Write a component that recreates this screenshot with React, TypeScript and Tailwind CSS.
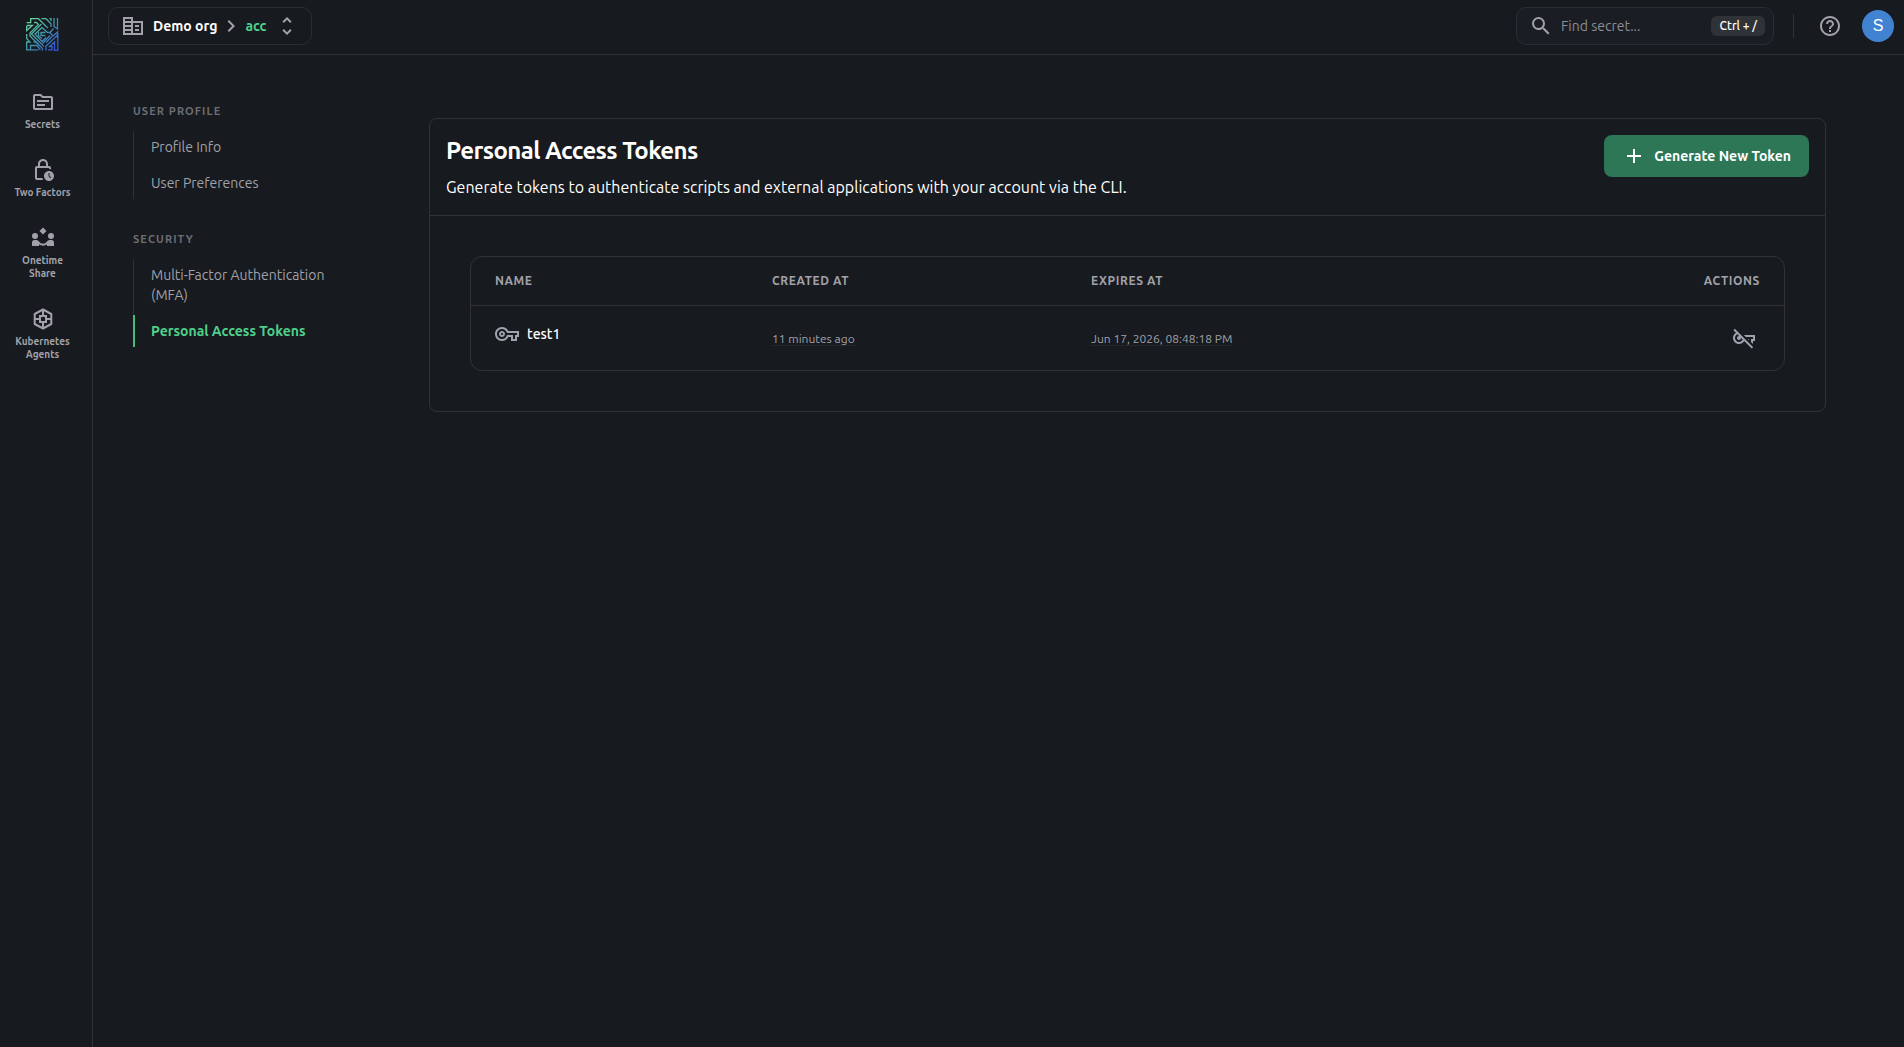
import type { ReactNode } from "react";
import {
  MdAdd,
  MdChevronRight,
  MdHelpOutline,
  MdOutlineLockClock,
  MdOutlineTopic,
  MdOutlineVpnKey,
  MdOutlineVpnKeyOff,
  MdSearch,
  MdUnfoldMore,
} from "react-icons/md";

function Logo() {
  return (
    <svg viewBox="0 0 33 33" className="size-[33px]" fill="none" stroke="url(#logo-fill)" strokeWidth="1.3" aria-hidden="true">
      <defs>
        <linearGradient id="logo-fill" x1="0" y1="0" x2="33" y2="33" gradientUnits="userSpaceOnUse">
          <stop offset="0" stopColor="#6ee79a" />
          <stop offset="0.5" stopColor="#3f93ad" />
          <stop offset="1" stopColor="#3448e0" />
        </linearGradient>
      </defs>
      <path d="M0.7 4.7H4.7V0.7H12.5L19 7.2" />
      <path d="M8 4.5H10.5L12.5 6.5L4 15V18L12.5 26.5" />
      <path d="M15.5 0.7H20L25 5.7V9" />
      <path d="M23.5 0.7H25V3" />
      <path d="M28 0V8.5L31.5 11V0" />
      <path d="M0.7 8V12.5L6.5 7.5H0.7" />
      <path d="M15.5 6L5.5 16L18 28.5" />
      <path d="M16 9.5L9 16L16 23.5L20 19.5" />
      <path d="M16 9.5L21.5 14.5H24L27.5 10.5" />
      <path d="M19.5 17.5H15V14.5H19.5M12.5 14V18L16 20.5" />
      <path d="M22 10L18.5 7" />
      <path d="M24 14.5L27 18L31.5 14V20" />
      <path d="M0.7 16V20.5L4 24H0.7V31.8H12.5" />
      <path d="M4.5 31.8V27.5H11L14.5 31.8" />
      <path d="M7.5 24H10L16.5 30.5V32.5" />
      <path d="M20 24.5L26 18.5M16.5 25.5L24 17.5" />
      <path d="M20 32.5V28L31.8 17V32.5H28.5V24L23.5 28.5H26V31.8H22" />
    </svg>
  );
}

function BuildingIcon() {
  return (
    <svg viewBox="0 0 24 24" className="size-6" fill="none" stroke="currentColor" strokeWidth="2" aria-hidden="true">
      <path d="M3 4H11V20H3ZM11 8H21V20H11M3 8H11M3 12H11M3 16H11M14 12H18M14 16H18" />
    </svg>
  );
}

function ShareIcon() {
  return (
    <svg viewBox="0 0 24 24" className="size-6" fill="currentColor" aria-hidden="true">
      <path d="M12 1.5L15.5 5L12 8.5L8.500 5Z" />
      <circle cx="4" cy="10" r="3" />
      <circle cx="20" cy="10" r="3" />
      <path d="M1 20V16.500Q1 14 3.500 14H5.500Q7.200 14 8 15.500Q9.500 17.700 12 17.700T16 15.500Q16.800 14 18.500 14H20.500Q23 14 23 16.500V20H16V18.600Q14.200 19.700 12 19.700T8 18.600V20Z" />
    </svg>
  );
}

function KubernetesIcon() {
  return (
    <svg viewBox="0 0 24 24" className="size-6" fill="none" stroke="currentColor" strokeWidth="2" aria-hidden="true">
      <path d="M12 2.500L20.300 7V17L12 21.500L3.700 17V7Z" strokeLinejoin="round" />
      <path d="M9 9H15V15H9ZM12 2.500V9M12 15V21.500M3.700 12H9M15 12H20.300" />
    </svg>
  );
}

function RailLink({ icon, label }: { icon: ReactNode; label: string }) {
  return (
    <a href="#" className="flex w-[58px] flex-col items-center gap-1 text-center text-[10px] leading-[13px] font-bold text-[#a1a1aa]">
      {icon}
      <span>{label}</span>
    </a>
  );
}

function MenuSection({ title, items, active }: { title: string; items: string[]; active?: string }) {
  return (
    <section className="flex flex-col gap-3">
      <h2 className="text-[11px] leading-4 font-bold tracking-widest text-[#6b6e75] uppercase">{title}</h2>
      <ul className="flex flex-col">
        {items.map((item, i) => (
          <li key={item} className={i > 0 ? "border-l border-[#2e3135] pt-1" : "border-l border-[#2e3135]"}>
            <a
              href="#"
              aria-current={item === active ? "page" : undefined}
              className={
                item === active
                  ? "-ml-px block border-l-2 border-[#48bb78] py-1.5 pl-4 text-sm leading-5 font-bold text-[#4fd08c]"
                  : "block py-1.5 pl-[17px] text-sm leading-5 text-[#a1a1aa]"
              }
            >
              {item}
            </a>
          </li>
        ))}
      </ul>
    </section>
  );
}

export default function App() {
  return (
    <div className="flex min-h-screen bg-[#171a1e] font-[Ubuntu,'Noto_Sans',sans-serif] text-white">
      <aside className="flex w-[93px] shrink-0 flex-col items-center gap-[39px] border-r border-[#303236] pt-[18px] pr-[7px]">
        <a href="#" aria-label="Home">
          <Logo />
        </a>
        <nav aria-label="Main" className="flex flex-col gap-[27px]">
          <RailLink icon={<MdOutlineTopic className="size-6" />} label="Secrets" />
          <RailLink icon={<MdOutlineLockClock className="size-6" />} label="Two Factors" />
          <RailLink icon={<ShareIcon />} label="Onetime Share" />
          <RailLink icon={<KubernetesIcon />} label="Kubernetes Agents" />
        </nav>
      </aside>

      <div className="flex min-w-0 flex-1 flex-col">
        <header className="flex h-[55px] items-center justify-between border-b border-[#303236] pr-2.5 pb-0.5 pl-[15px]">
          <button type="button" className="flex h-[38px] items-center rounded-[10px] border border-[#2a2d31] px-3 text-sm font-bold">
            <span className="mr-2 text-[#a1a1aa]">
              <BuildingIcon />
            </span>
            Demo org
            <MdChevronRight className="mx-0.5 size-6 text-[#a1a1aa]" />
            <span className="text-[#4fd08c]">acc</span>
            <MdUnfoldMore className="ml-[9px] size-6 text-[#a1a1aa]" />
          </button>
          <div className="flex items-center">
            <label className="flex h-[38px] w-[258px] items-center rounded-[10px] border border-[#2a2d31] bg-[#1a1d24] pr-2 pl-3">
              <MdSearch className="size-6 shrink-0 text-[#a1a1aa]" />
              <input
                type="text"
                aria-label="Find secret"
                placeholder="Find secret..."
                className="ml-2 min-w-0 flex-1 bg-transparent text-sm outline-none placeholder:text-[#8b8d95]"
              />
              <kbd className="rounded-md bg-[#2f3236] px-2 font-[Ubuntu,'Noto_Sans',sans-serif] text-xs leading-5 font-medium">Ctrl + /</kbd>
            </label>
            <span className="ml-[19px] h-6 w-px bg-[#303236]" />
            <button type="button" aria-label="Help" className="ml-6 text-[#a1a1aa]">
              <MdHelpOutline className="size-6" />
            </button>
            <button type="button" className="ml-5 size-8 rounded-full bg-[#4183d0] text-center font-['Liberation_Sans',sans-serif] text-base">S</button>
          </div>
        </header>

        <div className="flex items-start pr-[78px] pl-10">
          <nav aria-label="Settings" className="mr-[72px] flex w-56 shrink-0 flex-col gap-8 pt-12">
            <MenuSection title="User Profile" items={["Profile Info", "User Preferences"]} />
            <MenuSection
              title="Security"
              items={["Multi-Factor Authentication (MFA)", "Personal Access Tokens"]}
              active="Personal Access Tokens"
            />
          </nav>

          <main className="mt-[63px] min-w-0 flex-1 rounded-lg border border-[#303236]">
            <div className="flex items-start justify-between border-b border-[#303236] p-4">
              <div>
                <h1 className="text-2xl leading-8 font-bold tracking-tight">Personal Access Tokens</h1>
                <p className="mt-2 text-base leading-6">
                  Generate tokens to authenticate scripts and external applications with your account via the CLI.
                </p>
              </div>
              <button type="button" className="flex h-[42px] items-center gap-2 rounded-lg bg-[#2d7757] px-[18px] text-sm font-bold">
                <MdAdd className="size-6" />
                Generate New Token
              </button>
            </div>

            <div className="p-10">
              <div className="overflow-hidden rounded-xl border border-[#303236]">
                <table className="w-full table-fixed text-left">
                  <thead>
                    <tr className="h-12 border-b border-[#303236] text-xs leading-4 tracking-wider text-[#a1a1aa] uppercase">
                      <th className="w-[21.1%] px-6">Name</th>
                      <th className="w-[24.3%] px-6">Created at</th>
                      <th className="px-6">Expires at</th>
                      <th className="w-[14%] px-6 text-right">Actions</th>
                    </tr>
                  </thead>
                  <tbody>
                    <tr className="h-[65px] text-xs leading-4 text-[#a1a1aa]">
                      <td className="px-6 pb-2">
                        <span className="flex items-center gap-2 text-sm font-medium text-white">
                          <MdOutlineVpnKey className="size-6 text-[#9ca3af]" />
                          test1
                        </span>
                      </td>
                      <td className="px-6 pt-0.5">
                        <span className="border-b border-dotted border-[#303338]">11 minutes ago</span>
                      </td>
                      <td className="px-6 pt-0.5">
                        <span className="border-b border-dotted border-[#303338]">Jun 17, 2026, 08:48:18 PM</span>
                      </td>
                      <td className="px-6">
                        <button type="button" aria-label="Revoke token" className="mr-1 ml-auto block text-[#9ca3af]">
                          <MdOutlineVpnKeyOff className="size-6" />
                        </button>
                      </td>
                    </tr>
                  </tbody>
                </table>
              </div>
            </div>
          </main>
        </div>
      </div>
    </div>
  );
}
